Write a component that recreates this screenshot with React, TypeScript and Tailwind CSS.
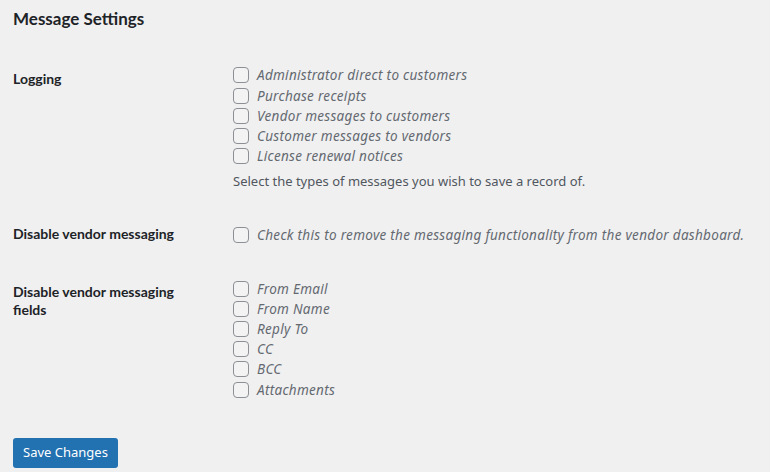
const font = { fontFamily: '"Noto Sans", "Open Sans", sans-serif' };
const strong = { fontFamily: 'Lato, "Noto Sans", sans-serif' };

function Check({ label, className = "" }: { label: string; className?: string }) {
  return (
    <label className={`flex h-[20px] items-center gap-2 ${className}`}>
      <span className="h-4 w-4 shrink-0 rounded-[4px] border border-[#8c8f94] bg-[#f3f3f3]" />
      <span className="text-[13.5px] italic tracking-[0.3px] text-[#646970]">{label}</span>
    </label>
  );
}

function Row({ label, children }: { label: string; children: React.ReactNode }) {
  return (
    <div className="flex">
      <div
        className="w-[210px] shrink-0 py-5 pr-[10px] text-[14px] font-bold leading-[18px] text-[#1d2327]"
        style={strong}
      >
        <div className="w-[180px]">{label}</div>
      </div>
      <div className="py-[15px] pl-[10px]">{children}</div>
    </div>
  );
}

export default function App() {
  return (
    <div className="min-h-[472px] bg-[#f0f0f1] px-[13px] pt-[8px]" style={font}>
      <h2 className="text-[17px] font-bold leading-[22px] text-[#1d2327]" style={strong}>
        Message Settings
      </h2>
      <div className="mt-[20px]">
        <Row label="Logging">
          <Check label="Administrator direct to customers" />
          <Check className="mt-[1px]" label="Purchase receipts" />
          <Check label="Vendor messages to customers" />
          <Check label="Customer messages to vendors" />
          <Check label="License renewal notices" />
          <p className="mt-[6px] text-[13px] leading-[18px] text-[#50575e]">
            Select the types of messages you wish to save a record of.
          </p>
        </Row>
        <Row label="Disable vendor messaging">
          <Check className="mt-[5px]" label="Check this to remove the messaging functionality from the vendor dashboard." />
        </Row>
        <Row label="Disable vendor messaging fields">
          <Check className="mt-[1px]" label="From Email" />
          <Check label="From Name" />
          <Check label="Reply To" />
          <Check label="CC" />
          <Check label="BCC" />
          <Check className="mt-[1px]" label="Attachments" />
        </Row>
      </div>
      <button className="mt-[23px] h-[30px] rounded-[3px] bg-[#2271b1] px-[10px] text-[13px] text-white">
        Save Changes
      </button>
    </div>
  );
}
